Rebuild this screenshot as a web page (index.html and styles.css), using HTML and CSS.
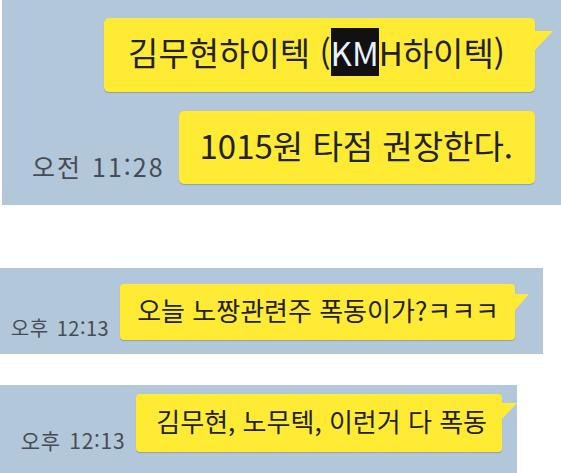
FILE: index.html
```html
<!DOCTYPE html>
<html lang="ko">
<head>
  <meta charset="UTF-8" />
  <meta name="viewport" content="width=device-width, initial-scale=1.0" />
  <title>채팅 캡처</title>
  <link rel="stylesheet" href="styles.css">
</head>
<body>
  <!-- 첫번째 캡처 -->
  <div class="shot shot-big">
    <div class="row">
      <div class="bubble tail">김무현하이텍 (<span class="sel">KM</span>H하이텍)</div>
    </div>
    <div class="row">
      <span class="time">오전 11:28</span>
      <div class="bubble">1015원 타점 권장한다.</div>
    </div>
  </div>

  <!-- 두번째 캡처 -->
  <div class="shot shot-mid">
    <div class="row">
      <span class="time">오후 12:13</span>
      <div class="bubble tail">오늘 노짱관련주 폭동이가?ㅋㅋㅋ</div>
    </div>
  </div>

  <!-- 세번째 캡처 -->
  <div class="shot shot-small">
    <div class="row">
      <span class="time">오후 12:13</span>
      <div class="bubble tail">김무현, 노무텍, 이런거 다 폭동</div>
    </div>
  </div>
</body>
</html>
```

FILE: styles.css
```css
/* 카톡 캡처 느낌 */
body {
  margin: 0;
  background: #fff;
  font-family: "Noto Sans CJK KR", "Noto Sans", sans-serif;
  color: #222;
}
.shot {
  background: #b2c7d9;
  box-sizing: border-box;
  overflow: hidden;
}
.row {
  display: flex;
  justify-content: flex-end;
  align-items: flex-end;
}
.bubble {
  position: relative;
  background: #ffeb33;
  border-radius: 5px;
  box-shadow: 0 1px 1px rgba(0,0,0,0.2);
  white-space: nowrap;
  box-sizing: border-box;
}
.tail::after {
  content: "";
  position: absolute;
  left: 100%;
  background: #ffeb33;
  clip-path: polygon(0 0, 100% 0, 0 100%);
}
.time {
  color: #464c55;
  white-space: nowrap;
  line-height: 1;
}
.sel {
  background: #111;
  color: #e8f2ff;
}

/* 큰 캡처 */
.shot-big {
  margin-left: 2px;
  height: 205px;
  padding: 18px 26px 0 0;
}
.shot-big .row + .row {
  margin-top: 19px;
}
.shot-big .bubble {
  height: 74px;
  line-height: 68px;
  font-size: 33px;
  padding: 0 30px 0 24px;
}
.shot-big .row + .row .bubble {
  height: 73px;
  padding: 0 22px 0 21px;
}
.shot-big .tail::after {
  top: 13px;
  width: 18px;
  height: 19px;
}
.shot-big .time {
  font-size: 25px;
  letter-spacing: 2px;
  word-spacing: 1px;
  margin-right: 14px;
  margin-bottom: 5px;
}

/* 중간 캡처 */
.shot-mid {
  margin-top: 63px;
  width: 543px;
  height: 86px;
  padding: 16px 28px 0 0;
}
.shot-mid .bubble {
  height: 56px;
  line-height: 52px;
  font-size: 26px;
  padding: 0 16px 0 17px;
  border-radius: 4px;
}
.shot-mid .tail::after {
  top: 10px;
  width: 14px;
  height: 16px;
}
.shot-mid .time {
  font-size: 20px;
  letter-spacing: 0.5px;
  word-spacing: 2px;
  margin-right: 11px;
  margin-bottom: 2px;
}

/* 작은 캡처 */
.shot-small {
  margin-top: 31px;
  width: 517px;
  height: 88px;
  padding: 9px 15px 0 0;
}
.shot-small .bubble {
  height: 58px;
  line-height: 54px;
  font-size: 26px;
  padding: 0 15px 0 20px;
  border-radius: 4px;
}
.shot-small .tail::after {
  top: 9px;
  width: 15px;
  height: 16px;
}
.shot-small .time {
  font-size: 21px;
  letter-spacing: 0.7px;
  word-spacing: 2px;
  margin-right: 11px;
  margin-bottom: 1px;
}
```
